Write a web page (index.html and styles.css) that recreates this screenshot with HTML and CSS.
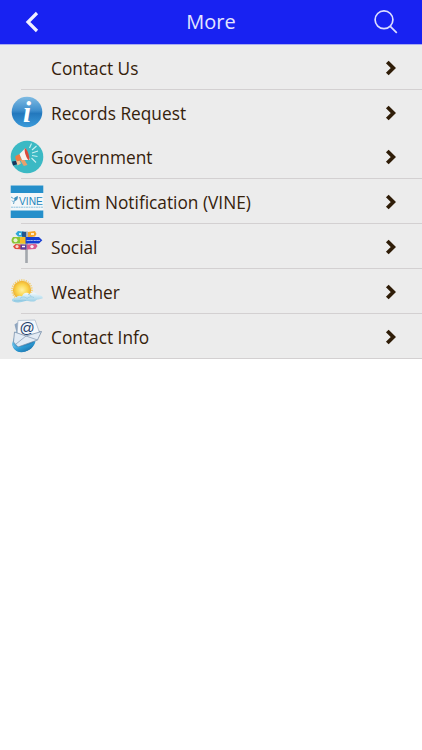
FILE: index.html
```html
<!DOCTYPE html>
<html lang="en">
<head>
    <meta charset="UTF-8">
    <meta name="viewport" content="width=device-width, initial-scale=1.0">
    <title>More</title>
    <link rel="stylesheet" href="styles.css">
</head>

<body>
    <header class="topbar">
        <svg class="back" viewBox="0 0 14 22"><path d="M12 2 3 11l9 9"/></svg>
        <h1 class="title">More</h1>
        <svg class="search" viewBox="0 0 24 24"><circle cx="10" cy="9.8" r="8.9"/><path d="m16.3 16.3 6.5 6.5"/></svg>
    </header>

    <ul class="menu">
        <li class="item">
            <span class="icon"></span>
            <span class="label">Contact Us</span>
            <svg class="arrow" viewBox="0 0 12 16"><path d="m2.3 2 6 6-6 6"/></svg>
        </li>
        <li class="item noline">
            <svg class="icon" viewBox="0 0 34 34">
                <defs>
                    <linearGradient id="blue" x1="0" y1="0" x2="0" y2="1">
                        <stop offset="0" stop-color="#7fbbe2"/>
                        <stop offset=".45" stop-color="#3f8fcd"/>
                        <stop offset=".55" stop-color="#2378bd"/>
                        <stop offset="1" stop-color="#3b9bda"/>
                    </linearGradient>
                </defs>
                <circle cx="17" cy="17" r="15.3" fill="url(#blue)"/>
                <text class="info" x="17" y="26.5" text-anchor="middle">i</text>
            </svg>
            <span class="label">Records Request</span>
            <svg class="arrow" viewBox="0 0 12 16"><path d="m2.3 2 6 6-6 6"/></svg>
        </li>
        <li class="item">
            <svg class="icon" viewBox="0 0 34 34">
                <circle cx="17" cy="17" r="16.3" fill="#3bb9c4"/>
                <path d="m2 21.5 5-.7 1 3.200-5 1.500z" fill="#17355a"/>
                <path d="m6 20.5 3-1 2 4-3.500 2z" fill="#f4c79b"/>
                <path d="m10 20 4-1 3.500 6-3.700 1z" fill="#e9a06b"/>
                <path d="m5.5 16 4-2 2.500 6-4.500 1.200c-2-1-2.500-3-2-5.200z" fill="#ef7b42"/>
                <path d="m9.5 14 6-6 4.500 12-8 0z" fill="#f7f2ee"/>
                <ellipse cx="17" cy="14.3" rx="1.5" ry="6.3" transform="rotate(-18 17 14.3)" fill="#d94b3c"/>
                <path d="m19.5 8 2-4.500M22 10l4.500-4M22 13l6-2M22 15.500l5.500 1M21.500 18l4.500 4.500" stroke="#c9f0f1" stroke-width="1.1" fill="none"/>
            </svg>
            <span class="label">Government</span>
            <svg class="arrow" viewBox="0 0 12 16"><path d="m2.3 2 6 6-6 6"/></svg>
        </li>
        <li class="item">
            <svg class="icon" viewBox="0 0 34 34">
                <path d="M.7.5h32.600v32.500H.7z" fill="#f3f7f9"/>
                <path d="M.7.5h32.600v7.500H.7zM.7 25.500h32.600v7.500H.7z" fill="#258fca"/>
                <path d="m1 12 2.500 1.500M4.500 13l3-1.500-.5 3-2 1zM4.500 15l-1 4M2 15.500l1.500 1.500" fill="#3d8fbd" stroke="#3d8fbd" stroke-width=".8"/>
                <text class="vine" x="9" y="19.5">VINE</text>
                <path d="M1 22.200h32" stroke="#8fc3df" stroke-width="1" stroke-dasharray="2 .5"/>
            </svg>
            <span class="label">Victim Notification (VINE)</span>
            <svg class="arrow" viewBox="0 0 12 16"><path d="m2.3 2 6 6-6 6"/></svg>
        </li>
        <li class="item">
            <svg class="icon" viewBox="0 0 34 34">
                <path d="M16.5 1.500v31.500" stroke="#a3a7ad" stroke-width="2.6"/>
                <path d="m8 1 8 1v5l-8-.5-2.500-2.700z" fill="#2da7d8"/>
                <path d="m12 1.500 4 .5v5l-4-.3z" fill="#24558d"/>
                <path d="m18 2 7-1 1.500 3L25 6.500l-7 1z" fill="#f3a427"/>
                <path d="M3 7h13v6.500H3q-3-3.250 0-6.500z" fill="#8bc534"/>
                <circle cx="5.5" cy="10.2" r="2" fill="#e8f3cc"/>
                <path d="M10 7h6v6.500h-6z" fill="#f5bd26"/>
                <path d="M15.500 7H29l3.300 3.200L29 13.500H15.500z" fill="#153fd3"/>
                <text class="sign" x="16.5" y="11.2">Social Media</text>
                <path d="m5.500 14 10.500 1v4.500l-11-.5-2-2.500z" fill="#e04a3d"/>
                <circle cx="7" cy="16.5" r="1.6" fill="#f8d9cf"/>
                <path d="M10.500 14.500h6v5h-6z" fill="#5b3c9b"/>
                <path d="m17 14.500 9-.8 1.500 2.300-2 3-8.500.5z" fill="#d85b91"/>
                <circle cx="22" cy="16.6" r="1.7" fill="#f8edf4"/>
                <path d="M12 16.500h3M9 4h2M21 4h3" stroke="#fff" stroke-width="1.5"/>
            </svg>
            <span class="label">Social</span>
            <svg class="arrow" viewBox="0 0 12 16"><path d="m2.3 2 6 6-6 6"/></svg>
        </li>
        <li class="item">
            <svg class="icon" viewBox="0 0 34 34">
                <defs>
                    <radialGradient id="sun">
                        <stop offset="0" stop-color="#fff2a2"/>
                        <stop offset=".6" stop-color="#fbd54d"/>
                        <stop offset="1" stop-color="#eeb132"/>
                    </radialGradient>
                    <linearGradient id="cloud" x1="0" y1="0" x2="0" y2="1">
                        <stop offset="0" stop-color="#f3fafc"/>
                        <stop offset="1" stop-color="#92cbe4"/>
                    </linearGradient>
                </defs>
                <circle cx="12" cy="16" r="10" fill="none" stroke="#f3cc65" stroke-width="1.5" stroke-dasharray="1.2 1.1"/>
                <circle cx="12" cy="16" r="9.2" fill="url(#sun)"/>
                <path d="M3 27.500c-2.500-2 0-4 3-3.500 1-2.500 4-3 6-1.500 1-4 5-5 7.500-2.500 3-2.500 7-1.500 8 1 4 0 6 1.800 5 3.500-3 1-6 .5-7 2.500-4 1.500-7-.5-10 0-4 1.500-9 2-12.500.5z" fill="url(#cloud)"/>
                <path d="M10 24.500c2-2 5-2 7 0 2-2 5-2 7-1M18 20.500c2 0 3 1 3 2M4 26.500c4 1 8-1 12 0" stroke="#8ac5df" stroke-width=".7" fill="none"/>
            </svg>
            <span class="label">Weather</span>
            <svg class="arrow" viewBox="0 0 12 16"><path d="m2.3 2 6 6-6 6"/></svg>
        </li>
        <li class="item">
            <svg class="icon" viewBox="0 0 34 34">
                <defs>
                    <linearGradient id="wave" x1="0" y1="0" x2="1" y2="1">
                        <stop offset="0" stop-color="#a7ddf4"/>
                        <stop offset=".5" stop-color="#2d9cd5"/>
                        <stop offset="1" stop-color="#155f98"/>
                    </linearGradient>
                </defs>
                <path d="M6 12 2 25c1 6 6 9 11 8 7-1 11-6 12-12z" fill="url(#wave)"/>
                <path d="m4.500 5.500 6-4L31.500 13l-4.500 7.500-17 6.500z" fill="#8fa5bf"/>
                <path d="m8 1.500 17-.5L30 15l-13 7-10-5z" fill="#f5f8fc" stroke="#9babc0" stroke-width=".6"/>
                <text class="at" x="17" y="13.5" text-anchor="middle">@</text>
                <path d="m4.500 13 11.500 4 15.500-4.500-4 8.500L8 28 3.500 23z" fill="#e3ebf4" stroke="#6f87a3" stroke-width=".7"/>
                <path d="m6 25 10-8 11.500 4" stroke="#8196b0" stroke-width=".7" fill="none"/>
                <path d="M2 23c1 4 4 5.500 8 5 6-.5 11-3 15.500-6-1 6-6 10-13 11-6 0-10-4-10.500-10z" fill="url(#wave)"/>
            </svg>
            <span class="label">Contact Info</span>
            <svg class="arrow" viewBox="0 0 12 16"><path d="m2.3 2 6 6-6 6"/></svg>
        </li>
    </ul>
</body>
</html>
```

FILE: styles.css
```css
* {
    box-sizing: border-box;
}
body {
    margin: 0;
    background-color: #ffffff;
    color: #35210b;
    font-family: 'Open Sans', 'Noto Sans', sans-serif;
}
svg {
    display: block;
    flex: none;
    overflow: visible;
}
.topbar {
    display: grid;
    grid-template-columns: 60px 1fr 60px;
    align-items: center;
    height: 45px;
    background-color: #1822f2;
    border-bottom: 1px solid #a9acf2;
    color: #e4e5ff;
}
.title {
    margin: 0;
    font-size: 20px;
    font-weight: 400;
    line-height: 44px;
    text-align: center;
}
.back {
    width: 14px;
    height: 22px;
    margin-left: 25px;
    fill: none;
    stroke: #f0f0ff;
    stroke-width: 3.2;
}
.search {
    width: 24px;
    height: 24px;
    margin-left: 12px;
    fill: none;
    stroke: #dcdeff;
    stroke-width: 1.7;
}
.menu {
    margin: 0;
    padding: 0;
    list-style: none;
    background-color: #ececec;
}
.item {
    display: flex;
    align-items: center;
    height: 44.8px;
    padding: 0 25px 0 10px;
    background: linear-gradient(#d3d0d1, #d3d0d1) 21px 100% / 100% 1px no-repeat;
}
.noline {
    background: none;
}
.icon {
    width: 34px;
    height: 34px;
}
.label {
    flex: 1;
    margin-left: 7px;
    padding-top: 3px;
    font-size: 17.3px;
    line-height: 24px;
    white-space: nowrap;
}
.arrow {
    width: 12px;
    height: 16px;
    margin-top: 1px;
    fill: none;
    stroke: #2f1d08;
    stroke-width: 3.8;
}
.info {
    fill: #ffffff;
    font-family: 'Liberation Serif', serif;
    font-size: 29px;
    font-style: italic;
    font-weight: bold;
}
.vine {
    fill: #2586bd;
    font-family: 'Liberation Sans', sans-serif;
    font-size: 10.2px;
}
.sign {
    fill: #ffffff;
    font-family: 'Liberation Sans', sans-serif;
    font-size: 2.2px;
    font-weight: bold;
}
.at {
    fill: #25426c;
    font-family: 'Liberation Sans', sans-serif;
    font-size: 15px;
}
```
